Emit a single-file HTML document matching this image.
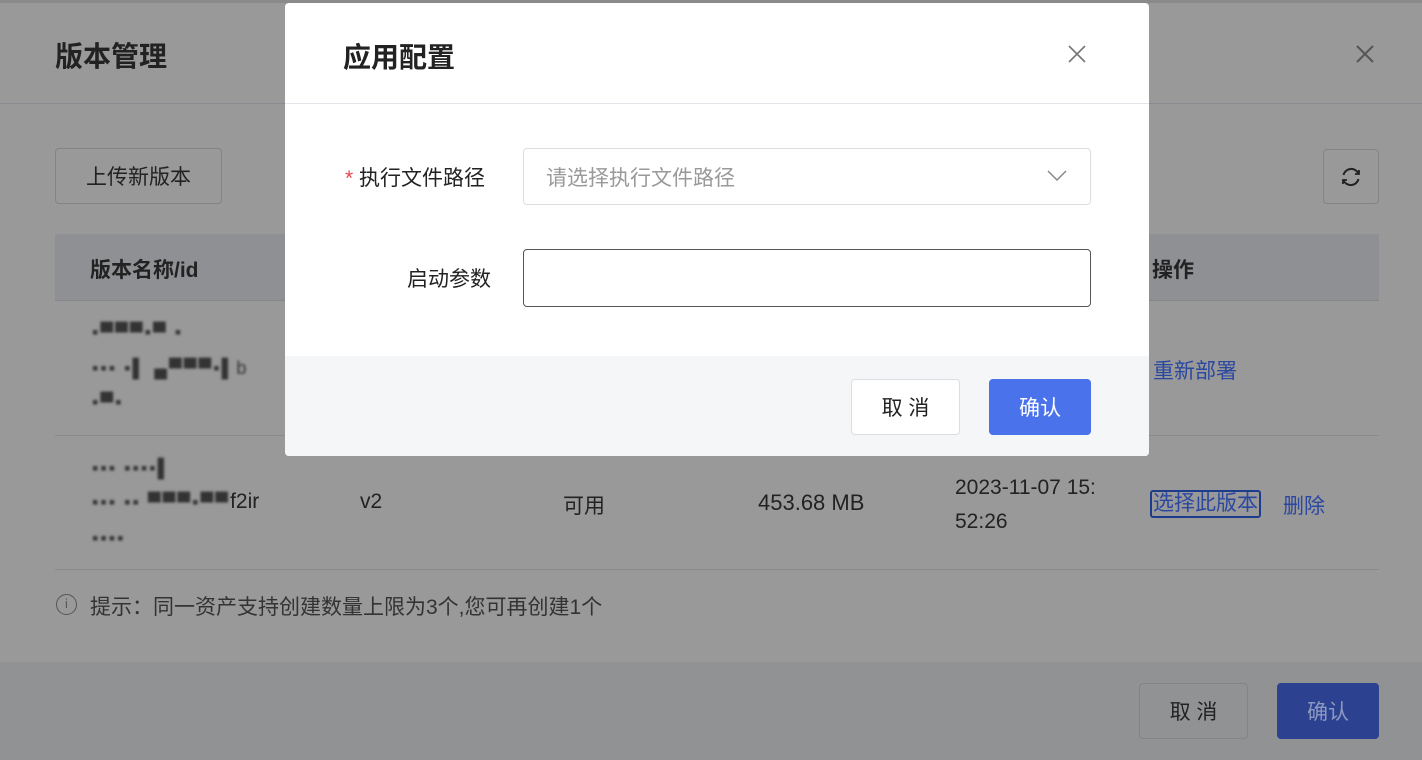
<!DOCTYPE html>
<html><head><meta charset="utf-8"><style>
*{margin:0;padding:0;box-sizing:border-box}
body{width:1422px;height:760px;position:relative;overflow:hidden;background:#999;font-family:"Liberation Sans","Noto Sans CJK SC",sans-serif;color:#1a1a1a}
.a{position:absolute}
.btn{position:absolute;border:1px solid #848484;border-radius:4px;display:flex;align-items:center;justify-content:center;font-size:21px}
.blur{filter:blur(1.2px);color:#333;font-size:18px;letter-spacing:2px}
</style></head><body>
<div class="a" style="left:0;top:0;width:1422px;height:3px;background:#8a8a8a"></div>
<div class="a" style="left:55px;top:35px;font-size:28px;font-weight:bold;color:#222">版本管理</div>
<svg class="a" style="left:1356px;top:45px" width="18" height="18" viewBox="0 0 18 18" stroke="#555" stroke-width="2"><path d="M1 1l16 16M17 1L1 17"/></svg>
<div class="a" style="left:0;top:103px;width:1422px;height:1px;background:#8a8a90"></div>
<div class="btn" style="left:55px;top:148px;width:167px;height:56px;color:#222">上传新版本</div>
<div class="btn" style="left:1323px;top:149px;width:56px;height:55px">
<svg width="24" height="24" viewBox="0 0 24 24" fill="none" stroke="#222" stroke-width="2"><path d="M4.5 10a8 8 0 0 1 15-1.5"/><path d="M19.5 14a8 8 0 0 1-15 1.5"/><path d="M20 5v4h-4" stroke-width="1.8"/><path d="M4 19v-4h4" stroke-width="1.8"/></svg></div>
<div class="a" style="left:55px;top:234px;width:1324px;height:67px;background:#8f9093;border-bottom:1px solid #85868a"></div>
<div class="a" style="left:90px;top:254px;font-size:21px;font-weight:bold;color:#222">版本名称/id</div>
<div class="a" style="left:1152px;top:254px;font-size:21px;font-weight:bold;color:#222">操作</div>
<div class="a blur" style="left:92px;top:322px">▪▀▀▀▪▀ ▪</div>
<div class="a blur" style="left:92px;top:358px">▪▪▪ ▪▌ ▄▀▀▀▪▌b</div>
<div class="a blur" style="left:92px;top:392px">▪▀▪</div>
<div class="a" style="left:1153px;top:355px;font-size:21px;color:#2b48a0">重新部署</div>
<div class="a" style="left:55px;top:435px;width:1324px;height:1px;background:#8a8a8e"></div>
<div class="a blur" style="left:92px;top:458px">▪▪▪ ▪▪▪▪▌</div>
<div class="a" style="left:92px;top:490px;font-size:21px;color:#222"><span class="blur">▪▪▪ ▪▪ ▀▀▀▪▀▀</span>f2ir</div>
<div class="a blur" style="left:92px;top:528px">▪▪▪▪</div>
<div class="a" style="left:360px;top:490px;font-size:21px;color:#222">v2</div>
<div class="a" style="left:563px;top:490px;font-size:21px;color:#222">可用</div>
<div class="a" style="left:758px;top:490px;font-size:22px;color:#222">453.68 MB</div>
<div class="a" style="left:955px;top:471px;font-size:21px;color:#222;line-height:34px">2023-11-07 15:<br>52:26</div>
<div class="a" style="left:1150px;top:490px;font-size:21px;color:#2b48a0;border:2px solid #1e3c8c;border-radius:3px;line-height:24px;padding:0 1px">选择此版本</div>
<div class="a" style="left:1283px;top:490px;font-size:21px;color:#2b48a0">删除</div>
<div class="a" style="left:55px;top:569px;width:1324px;height:1px;background:#8a8a8e"></div>
<div class="a" style="left:56px;top:594px;width:21px;height:21px;border:1.5px solid #555;border-radius:50%;font-size:13px;color:#555;text-align:center;line-height:18px">i</div>
<div class="a" style="left:90px;top:591px;font-size:21px;color:#333">提示：同一资产支持创建数量上限为3个,您可再创建1个</div>
<div class="a" style="left:0;top:662px;width:1422px;height:98px;background:#919294"></div>
<div class="btn" style="left:1139px;top:683px;width:109px;height:56px;color:#222">取 消</div>
<div class="btn" style="left:1277px;top:683px;width:102px;height:56px;background:#2c4290;border-color:#2c4290;color:#8c98c0">确认</div>

<div class="a" style="left:285px;top:3px;width:864px;height:453px;background:#fff;border-radius:4px;overflow:hidden">
<div class="a" style="left:58px;top:33px;font-size:28px;font-weight:bold;color:#222">应用配置</div>
<svg class="a" style="left:783px;top:42px" width="18" height="18" viewBox="0 0 18 18" stroke="#777" stroke-width="1.6"><path d="M1 1l16 16M17 1L1 17"/></svg>
<div class="a" style="left:0;top:100px;width:864px;height:1px;background:#e4e5ea"></div>
<div class="a" style="left:60px;top:159px;font-size:21px;color:#222"><span style="color:#e5484d">*</span> 执行文件路径</div>
<div class="a" style="left:238px;top:145px;width:568px;height:57px;border:1px solid #dcdde2;border-radius:4px"></div>
<div class="a" style="left:261px;top:159px;font-size:21px;color:#999">请选择执行文件路径</div>
<svg class="a" style="left:762px;top:166px" width="20" height="14" viewBox="0 0 20 14" fill="none" stroke="#888" stroke-width="1.5"><path d="M1 2l9 9 9-9"/></svg>
<div class="a" style="left:122px;top:260px;font-size:21px;color:#222">启动参数</div>
<div class="a" style="left:238px;top:246px;width:568px;height:58px;border:1px solid #555;border-radius:4px"></div>
<div class="a" style="left:0;top:353px;width:864px;height:100px;background:#f5f6f8"></div>
<div class="btn" style="left:566px;top:376px;width:109px;height:56px;background:#fff;border-color:#dcdde2;color:#222">取 消</div>
<div class="btn" style="left:704px;top:376px;width:102px;height:56px;background:#4a72eb;border-color:#4a72eb;color:#fff">确认</div>
</div>
</body></html>
